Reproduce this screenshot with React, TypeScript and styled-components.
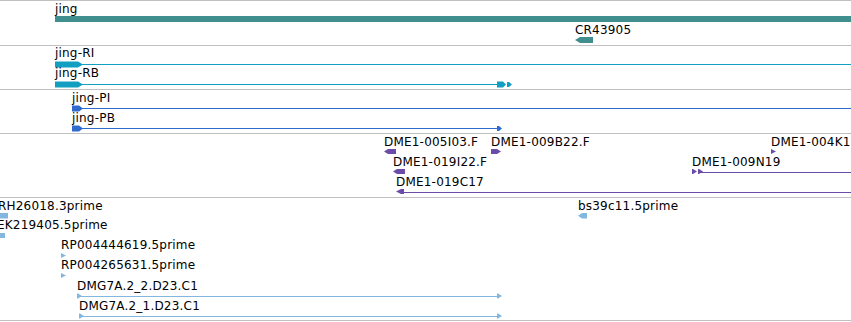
import React from "react";
import styled, { createGlobalStyle } from "styled-components";

const colors = {
  teal: "#418e8e",
  cyan: "#129fc2",
  blue: "#2f6bcd",
  purple: "#6b4ca8",
  sky: "#82b8e0",
  rule: "#c0c0c0",
};

type Shape =
  | { kind: "rect"; x: number; y: number; w: number; h: number }
  | { kind: "poly"; points: string };

type Label = { text: string; x: number; y: number };

type TrackData = {
  name: string;
  height: number;
  color: string;
  labels: Label[];
  shapes: Shape[];
};

// block with an arrow tip pointing right, centred on cy
const right = (x0: number, x1: number, cy: number, h = 6, tip = 4): Shape => ({
  kind: "poly",
  points: `${x0},${cy - h / 2} ${x1},${cy - h / 2} ${x1 + tip},${cy} ${x1},${cy + h / 2} ${x0},${cy + h / 2}`,
});
// block with an arrow tip pointing left
const left = (x0: number, x1: number, cy: number, h = 5, tip = 4): Shape => ({
  kind: "poly",
  points: `${x0},${cy} ${x0 + tip},${cy - h / 2} ${x1},${cy - h / 2} ${x1},${cy + h / 2} ${x0 + tip},${cy + h / 2}`,
});
const line = (x0: number, x1: number, y: number): Shape => ({ kind: "rect", x: x0, y, w: x1 - x0, h: 1 });
const bar = (x0: number, x1: number, y: number, h: number): Shape => ({ kind: "rect", x: x0, y, w: x1 - x0, h });

const tracks: TrackData[] = [
  {
    name: "gene",
    height: 44,
    color: colors.teal,
    labels: [
      { text: "jing", x: 55, y: 2 },
      { text: "CR43905", x: 575, y: 23 },
    ],
    shapes: [bar(55, 851, 15, 6), left(575, 593, 39, 6, 5)],
  },
  {
    name: "transcripts-r",
    height: 43,
    color: colors.cyan,
    labels: [
      { text: "jing-RI", x: 55, y: 1 },
      { text: "jing-RB", x: 55, y: 21 },
    ],
    shapes: [
      line(80, 851, 18),
      right(55, 78, 18.5, 6, 5),
      line(80, 497, 38),
      right(55, 78, 38.5, 6, 5),
      right(497, 503, 38.5, 6, 3),
      right(507, 509, 38.5, 5, 3),
    ],
  },
  {
    name: "transcripts-p",
    height: 43,
    color: colors.blue,
    labels: [
      { text: "jing-PI", x: 72, y: 2 },
      { text: "jing-PB", x: 72, y: 22 },
    ],
    shapes: [
      line(80, 851, 18),
      right(72, 79, 18.5, 6, 4),
      line(80, 497, 38),
      right(72, 79, 38.5, 6, 4),
      right(497, 499, 38.5, 5, 3),
    ],
  },
  {
    name: "est",
    height: 63,
    color: colors.purple,
    labels: [
      { text: "DME1-005I03.F", x: 384, y: 2 },
      { text: "DME1-009B22.F", x: 491, y: 2 },
      { text: "DME1-004K12.F", x: 771, y: 2 },
      { text: "DME1-019I22.F", x: 393, y: 22 },
      { text: "DME1-009N19", x: 692, y: 22 },
      { text: "DME1-019C17", x: 396, y: 42 },
    ],
    shapes: [
      left(384, 396, 17.5),
      right(491, 497, 17.5, 5, 4),
      right(771, 771, 17.5, 5, 5),
      left(393, 405, 37.5),
      line(700, 851, 38),
      right(692, 693, 37.5, 5, 4),
      right(698, 699, 37.5, 5, 4),
      line(400, 851, 58),
      left(396, 404, 57.5, 5, 5),
    ],
  },
  {
    name: "cdna",
    height: 122,
    color: colors.sky,
    labels: [
      { text: "RH26018.3prime", x: -2, y: 2 },
      { text: "bs39c11.5prime", x: 578, y: 2 },
      { text: "EK219405.5prime", x: -3, y: 21 },
      { text: "RP004444619.5prime", x: 61, y: 41 },
      { text: "RP004265631.5prime", x: 61, y: 61 },
      { text: "DMG7A.2_2.D23.C1", x: 77, y: 82 },
      { text: "DMG7A.2_1.D23.C1", x: 79, y: 102 },
    ],
    shapes: [
      bar(0, 8, 15, 5.5),
      left(578, 587, 17.8, 5.5, 4),
      bar(0, 5, 35, 5),
      right(61, 61, 57.5, 5, 5),
      right(61, 61, 77.5, 5, 5),
      line(79, 497, 98),
      right(77, 78, 98, 5, 4),
      right(497, 498, 98, 5, 4),
      line(81, 497, 118),
      right(79, 80, 118, 5, 4),
      right(497, 498, 118, 5, 4),
    ],
  },
];

function App() {
  return (
    <>
      <GlobalStyle />
      <Browser>
        {tracks.map((t) => (
          <Track key={t.name} $height={t.height}>
            <Glyphs width={851} height={t.height} fill={t.color}>
              {t.shapes.map((s, i) =>
                s.kind === "rect" ? (
                  <rect key={i} x={s.x} y={s.y} width={s.w} height={s.h} />
                ) : (
                  <polygon key={i} points={s.points} />
                )
              )}
            </Glyphs>
            {t.labels.map((l) => (
              <FeatureName key={l.text} $x={l.x} $y={l.y}>
                {l.text}
              </FeatureName>
            ))}
          </Track>
        ))}
      </Browser>
    </>
  );
}

const GlobalStyle = createGlobalStyle`
  html, body {
    margin: 0;
    padding: 0;
    background: #ffffff;
    overflow: hidden;
  }
  body {
    font-family: "DejaVu Sans", "Liberation Sans", sans-serif;
  }
`;

const Browser = styled.div`
  width: 851px;
  border-top: 1px solid ${colors.rule};
  display: flex;
  flex-direction: column;
`;

const Track = styled.div<{ $height: number }>`
  position: relative;
  height: ${(p) => p.$height}px;
  border-bottom: 1px solid ${colors.rule};
  overflow: hidden;
`;

const Glyphs = styled.svg`
  position: absolute;
  top: 0;
  left: 0;
  display: block;
`;

const FeatureName = styled.span<{ $x: number; $y: number }>`
  position: absolute;
  left: ${(p) => p.$x}px;
  top: ${(p) => p.$y}px;
  font-size: 12px;
  line-height: 12px;
  letter-spacing: 0.2px;
  color: #000000;
  white-space: nowrap;
`;

export default App;
